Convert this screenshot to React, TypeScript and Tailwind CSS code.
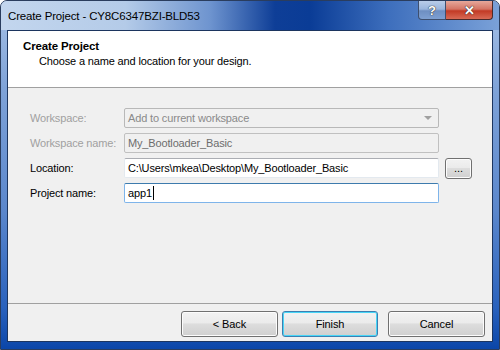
import React from "react";

const font = "font-['Segoe_UI','Liberation_Sans',Arial,sans-serif]";

function WinButton({ children, className = "", primary = false }: { children: React.ReactNode; className?: string; primary?: boolean }) {
  return (
    <div
      className={`flex items-center justify-center rounded-[3px] border text-[11px] tracking-[-0.1px] text-black bg-[linear-gradient(180deg,#f2f2f2_0%,#ebebeb_45%,#dddddd_50%,#cfcfcf_100%)] ${
        primary
          ? "border-[#3c7fb1] shadow-[inset_0_0_0_1px_#48d6f7]"
          : "border-[#707070] shadow-[inset_0_0_0_1px_#fcfcfc]"
      } ${className}`}
    >
      {children}
    </div>
  );
}

export default function App() {
  return (
    <div className={`${font} relative flex h-[350px] w-[500px] flex-col overflow-hidden rounded-t-[7px] border border-[#2a3d5e] bg-[linear-gradient(180deg,#a7c1e6_0%,#7fa3d8_25%,#5b87cc_60%,#2a62bd_88%,#0b46a8_100%)] text-[11px] tracking-[-0.15px]`}>
      {/* title bar */}
      <div className="relative flex h-[29px] shrink-0 items-start bg-[linear-gradient(90deg,#c3d6ee_0%,#b4cbe8_25%,#6e94cf_42%,#0e3e97_55%,#0a3c96_62%,#3e6fbd_78%,#7aa1d8_100%)]">
        <div className="whitespace-nowrap pl-[7px] pt-[7px] text-[11.5px] leading-[16px] text-black">Create Project - CY8C6347BZI-BLD53</div>
        <div className="ml-auto mr-[6px] flex">
          <div className="flex h-[19px] w-[28px] items-center justify-center rounded-bl-[4px] border border-t-0 border-[#3e4f6e] bg-[linear-gradient(180deg,#b9cde9_0%,#9ab6dd_45%,#6e8fc2_55%,#7ea0d2_100%)] text-[13px] font-bold leading-none text-white [text-shadow:0_0_1px_#222,0_0_1px_#222]">
            ?
          </div>
          <div className="flex h-[19px] w-[47px] items-center justify-center rounded-br-[4px] border border-l-0 border-t-0 border-[#4a2a2a] bg-[linear-gradient(180deg,#e6a89b_0%,#d47565_45%,#c23a25_55%,#d86a55_100%)] text-[13px] font-bold leading-none text-white [text-shadow:0_0_1px_#222,0_0_1px_#222]">
            ✕
          </div>
        </div>
      </div>

      {/* client */}
      <div className="mx-[6px] mb-[7px] flex flex-1 flex-col border border-[#1c355f] bg-[#f0f0f0]">
        {/* header */}
        <div className="h-[57px] shrink-0 border-b border-[#a0a0a0] bg-white pl-[15px] pt-[8px]">
          <div className="whitespace-nowrap text-[11.5px] font-bold leading-[15px] text-black">Create Project</div>
          <div className="whitespace-nowrap pl-[16px] leading-[15px] text-black">Choose a name and location for your design.</div>
        </div>

        {/* body */}
        <div className="flex flex-1 flex-col gap-[5px] pl-[22px] pt-[20px]">
          <div className="flex h-[20px] items-center">
            <div className="w-[94px] whitespace-nowrap text-[#a0a0a0]">Workspace:</div>
            <div className="flex h-[20px] w-[315px] items-center justify-between rounded-[2px] border border-[#b8b8b8] bg-[#f0f0f0] pl-[3px] pr-[6px] text-[#8a8a8a]">
              <span className="whitespace-nowrap">Add to current workspace</span>
              <svg width="8" height="4" viewBox="0 0 8 4"><path d="M0 0h8L4 4z" fill="#a0a0a0" /></svg>
            </div>
          </div>
          <div className="flex h-[20px] items-center">
            <div className="w-[94px] whitespace-nowrap text-[#a0a0a0]">Workspace name:</div>
            <div className="flex h-[20px] w-[315px] items-center whitespace-nowrap rounded-[2px] border border-[#c0c0c0] bg-[#f0f0f0] pl-[3px] text-[#6d6d6d]">
              My_Bootloader_Basic
            </div>
          </div>
          <div className="flex h-[20px] items-center">
            <div className="w-[94px] whitespace-nowrap text-black">Location:</div>
            <div className="flex h-[20px] w-[315px] items-center whitespace-nowrap rounded-[2px] border border-[#e3e9ef] border-t-[#abadb3] bg-white pl-[3px] text-black">
              C:\Users\mkea\Desktop\My_Bootloader_Basic
            </div>
            <WinButton className="ml-[6px] h-[21px] w-[27px]">...</WinButton>
          </div>
          <div className="flex h-[20px] items-center">
            <div className="w-[94px] whitespace-nowrap text-black">Project name:</div>
            <div className="flex h-[20px] w-[315px] items-center rounded-[2px] border border-[#7eb4ea] border-t-[#3d7bad] bg-white pl-[3px] text-black">
              app1<span className="ml-[1px] inline-block h-[14px] w-[1px] bg-black" />
            </div>
          </div>
        </div>

        {/* footer */}
        <div className="flex h-[38px] shrink-0 items-start justify-end border-t border-[#a0a0a0] pr-[7px] pt-[7px]">
          <WinButton className="h-[26px] w-[97px]">&lt; Back</WinButton>
          <WinButton primary className="ml-[4px] h-[26px] w-[96px]">Finish</WinButton>
          <WinButton className="ml-[10px] h-[26px] w-[97px]">Cancel</WinButton>
        </div>
      </div>
    </div>
  );
}
